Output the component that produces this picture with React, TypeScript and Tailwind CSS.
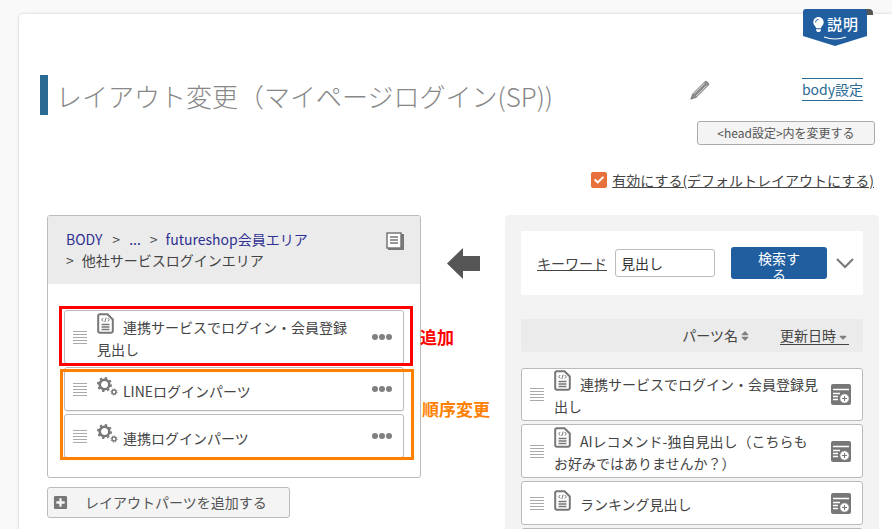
import { FaLightbulb, FaPlusSquare, FaSort, FaSortDown, FaCheck } from "react-icons/fa";

const FONT = "font-['Noto_Sans_CJK_JP','Noto_Sans',sans-serif]";

function DragHandle() {
  return (
    <div className="flex w-[14px] shrink-0 flex-col gap-[2px]">
      {[0, 1, 2, 3, 4].map((i) => (
        <span key={i} className="h-px w-full bg-[#aaaaaa]" />
      ))}
    </div>
  );
}

function FileIcon() {
  return (
    <svg width="17" height="21" viewBox="0 0 17 21" className="-mt-[2px] inline-block shrink-0 align-[-1px]">
      <path d="M3 1.2h7.5l5.3 5.3V18a1.8 1.8 0 0 1-1.8 1.8H3A1.8 1.8 0 0 1 1.2 18V3A1.8 1.8 0 0 1 3 1.2z" fill="#fff" stroke="#777" strokeWidth="2" />
      <path d="M4.5 11.5h8M4.5 14h8M4.5 16.5h8" stroke="#777" strokeWidth="1.5" />
      <path d="M6.2 5 4.7 6.8l1.5 1.7M10.8 5l1.5 1.8-1.5 1.7M9.2 4.6 7.8 9" stroke="#777" strokeWidth="1" fill="none" />
    </svg>
  );
}

function GearIcon() {
  return (
    <svg width="21" height="21" viewBox="0 0 21 21" className="mr-[5px] inline-block align-[-1px]">
      <circle cx="7.5" cy="7.5" r="4.8" fill="none" stroke="#777" strokeWidth="2.6" />
      <circle cx="7.5" cy="7.5" r="6.6" fill="none" stroke="#777" strokeWidth="1.8" strokeDasharray="2.4 2.8" />
      <circle cx="17" cy="15" r="2" fill="none" stroke="#777" strokeWidth="1.5" />
      <circle cx="17" cy="15" r="3.1" fill="none" stroke="#777" strokeWidth="1" strokeDasharray="1.2 1.2" />
    </svg>
  );
}

function PencilIcon() {
  return (
    <svg width="20" height="20" viewBox="0 0 20 20" className="mr-[92px]">
      <path d="M0.5 19.5l1.6-5.6L14.8 1.2a1.6 1.6 0 0 1 2.2 0l1.8 1.8a1.6 1.6 0 0 1 0 2.2L6.1 17.9z" fill="#8a8a8a" />
      <path d="M3.8 14 14.6 3.2M6 16.2 16.8 5.4" stroke="#e4e4e4" strokeWidth="0.9" />
      <path d="M0.5 19.5l.8-2.9 2.1 2.1z" fill="#777" />
    </svg>
  );
}

function AddPartIcon() {
  return (
    <svg width="20" height="21" viewBox="0 0 20 21" className="shrink-0">
      <rect width="20" height="21" rx="2" fill="#777" />
      <path d="M2 5.5h16M2 9.5h7M2 12.5h5M2 15.5h5" stroke="#fff" strokeWidth="1.3" />
      <circle cx="13.5" cy="14.5" r="4.8" fill="#fff" stroke="#777" />
      <path d="M11 14.5h5M13.5 12v5" stroke="#777" strokeWidth="1.1" />
    </svg>
  );
}

function LeftItem({ h, icon, children }: { h: string; icon: React.ReactNode; children: React.ReactNode }) {
  return (
    <div className={`flex items-center rounded-[3px] border border-[#bbbbbb] bg-white pl-[8px] pr-[11px] shadow-[0_1px_1px_rgba(0,0,0,0.08)] ${h}`}>
      <DragHandle />
      <div className="min-w-0 flex-1 pl-[10px] text-[14px] leading-[22px] text-[#444]">
        {icon}
        {children}
      </div>
      <div className="flex shrink-0 gap-px">
        {[0, 1, 2].map((i) => (
          <span key={i} className="h-[6px] w-[6px] rounded-full bg-[#808080]" />
        ))}
      </div>
    </div>
  );
}

function RightItem({ h, children }: { h: string; children: React.ReactNode }) {
  return (
    <div className={`flex items-center rounded-[3px] border border-[#bbbbbb] bg-white pl-[8px] pr-[11px] ${h}`}>
      <DragHandle />
      <div className="min-w-0 flex-1 pl-[10px] pr-[10px] text-[14px] leading-[22px] text-[#444]">
        <FileIcon />
        <span className="ml-[9px]">{children}</span>
      </div>
      <AddPartIcon />
    </div>
  );
}

export default function App() {
  return (
    <div className={`h-[529px] overflow-hidden bg-[#f9f9f9] pl-[19px] pt-[14px] ${FONT}`}>
      <div className="relative h-[560px] rounded-tl-[4px] bg-white shadow-[0_0_3px_rgba(0,0,0,0.2)]">
        {/* Help tab */}
        <div className="absolute left-[784px] top-[-5px] h-[37px] w-[70px]">
          <svg width="70" height="37" viewBox="0 0 70 37" className="absolute inset-0">
            <path d="M60 0h6a4 4 0 0 1 4 4v2h-10z" fill="#555" />
            <path d="M3 0h58a3 3 0 0 1 3 3v24l-32 10L0 27V3a3 3 0 0 1 3-3z" fill="#205e9f" />
            <path d="M21 28q11 4 22 0" stroke="#fff" strokeWidth="1.2" fill="none" />
          </svg>
          <div className="absolute left-[8px] top-[5px] flex items-center gap-px text-[15px] font-medium leading-[20px] tracking-[1px] text-white">
            <FaLightbulb size={15} />
            <span>説明</span>
          </div>
        </div>

        {/* Page heading */}
        <div className="flex pl-[21px] pr-[17px] pt-[61px]">
          <div className="flex h-[40px] items-center border-l-[8px] border-[#2a6a93] pl-[11px] text-[26px] font-extralight leading-[39px] text-[#888]">
            <span className="-ml-[3px]">レイアウト変更（マイページログイン(SP))</span>
          </div>
          <div className="ml-auto flex flex-col items-end">
            <div className="mt-[3px] flex items-center pr-[12px]">
              <PencilIcon />
              <span className="border-y border-[#2a6a93] text-[14px] leading-[21px] text-[#2a6a93]">body設定</span>
            </div>
            <button className="mt-[20px] h-[24px] w-[178px] rounded-[3px] border border-[#aaaaaa] bg-[#f4f4f4] text-[12px] leading-[20px] text-[#555]">
              &lt;head設定&gt;内を変更する
            </button>
          </div>
        </div>

        {/* Enable checkbox */}
        <div className="mt-[25px] flex items-center justify-end pr-[18px]">
          <span className="mr-[5px] flex h-[16px] w-[16px] items-center justify-center rounded-[2px] bg-[#e8703a] text-white">
            <FaCheck size={10} />
          </span>
          <span className="text-[14px] leading-[20px] text-[#444] underline">有効にする(デフォルトレイアウトにする)</span>
        </div>

        {/* Two columns */}
        <div className="mt-[25px] flex items-start pl-[28px]">
          <div className="w-[374px] shrink-0">
            <div className="h-[263px] overflow-hidden rounded-[3px] border border-[#bbbbbb] bg-white">
              <div className="relative h-[68px] bg-[#ebebeb] pl-[18px] pt-[13px] text-[14px] leading-[21px] text-[#444]">
                <div>
                  <span className="text-[#2e3192]">BODY</span>
                  <span className="ml-[10px]">&gt;</span>
                  <span className="ml-[9px] text-[#2e3192]">...</span>
                  <span className="ml-[9px]">&gt;</span>
                  <span className="ml-[8px] text-[#2e3192]">futureshop会員エリア</span>
                </div>
                <div>
                  &gt;<span className="ml-[8px]">他社サービスログインエリア</span>
                </div>
                <svg width="18" height="18" viewBox="0 0 18 18" className="absolute right-[16px] top-[16px]">
                  <rect x="2" y="2" width="16" height="16" fill="#777" />
                  <rect x="1" y="1" width="14" height="15" fill="#fff" stroke="#777" strokeWidth="1.5" />
                  <path d="M4 5h8M4 8h8M4 11h8" stroke="#777" strokeWidth="1.5" />
                </svg>
              </div>
              <div className="flex flex-col gap-[3px] px-[16px] pt-[26px]">
                <LeftItem h="h-[54px]" icon={<FileIcon />}>
                  <span className="ml-[9px]">連携サービスでログイン・会員登録</span>
                  <br />
                  見出し
                </LeftItem>
                <LeftItem h="h-[44px]" icon={<GearIcon />}>
                  LINEログインパーツ
                </LeftItem>
                <LeftItem h="h-[44px]" icon={<GearIcon />}>
                  連携ログインパーツ
                </LeftItem>
              </div>
            </div>
            <button className="mt-[9px] flex h-[31px] w-[243px] items-center rounded-[3px] border border-[#bbbbbb] bg-[#f4f4f4] pl-[5px] text-[14px] text-[#555]">
              <FaPlusSquare size={15} className="text-[#777]" />
              <span className="ml-[17px]">レイアウトパーツを追加する</span>
            </button>
          </div>

          <div className="flex w-[84px] shrink-0 justify-center pt-[33px]">
            <svg width="33" height="31" viewBox="0 0 33 31" className="ml-[1px]">
              <path d="M0 15.5 16 0v8h17v15H16v8z" fill="#555" />
            </svg>
          </div>

          <div className="h-[320px] w-[374px] shrink-0 rounded-[4px] bg-[#f3f3f3] p-[16px]">
            <div className="flex h-[64px] items-center rounded-[2px] bg-white pl-[16px]">
              <span className="text-[14px] text-[#444] underline">キーワード</span>
              <input
                readOnly
                value="見出し"
                className="ml-[8px] h-[28px] w-[100px] rounded-[3px] border border-[#bbbbbb] bg-white px-[5px] text-[14px] text-[#333]"
              />
              <div className="ml-[16px] h-[32px] w-[96px] overflow-hidden rounded-[3px] bg-[#205e9f] px-[24px] pt-[3px] text-center text-[14px] leading-[16px] text-white">
                検索する
              </div>
              <svg width="18" height="11" viewBox="0 0 18 11" className="ml-[9px]">
                <path d="M1 1l8 8 8-8" stroke="#777" strokeWidth="2" fill="none" />
              </svg>
            </div>
            <div className="mt-[24px] flex h-[33px] items-center justify-end rounded-[2px] bg-[#ebebeb] pr-[14px] text-[14px] text-[#444]">
              <span>パーツ名</span>
              <FaSort size={12} className="ml-[1px] text-[#808080]" />
              <span className="ml-[29px] flex items-center border-b border-[#444] leading-[18px]">
                更新日時
                <FaSortDown size={12} className="ml-[1px] text-[#808080]" />
              </span>
            </div>
            <div className="mt-[16px] flex flex-col gap-[3px]">
              <RightItem h="h-[53px]">連携サービスでログイン・会員登録見出し</RightItem>
              <RightItem h="h-[54px]">AIレコメンド-独自見出し（こちらもお好みではありませんか？）</RightItem>
              <RightItem h="h-[44px]">ランキング見出し</RightItem>
              <RightItem h="h-[44px]"> </RightItem>
            </div>
          </div>
        </div>

        {/* Annotations */}
        <div className="absolute left-[40px] top-[292px] h-[60px] w-[354px] border-[3px] border-[#ff0000]" />
        <div className="absolute left-[41px] top-[355px] h-[91px] w-[354px] border-[3px] border-[#ff8000]" />
        <span className="absolute left-[401px] top-[312px] text-[17px] font-bold leading-[22px] text-[#ff0000]">追加</span>
        <span className="absolute left-[403px] top-[384px] text-[17px] font-bold leading-[22px] text-[#ff8000]">順序変更</span>
      </div>
    </div>
  );
}
